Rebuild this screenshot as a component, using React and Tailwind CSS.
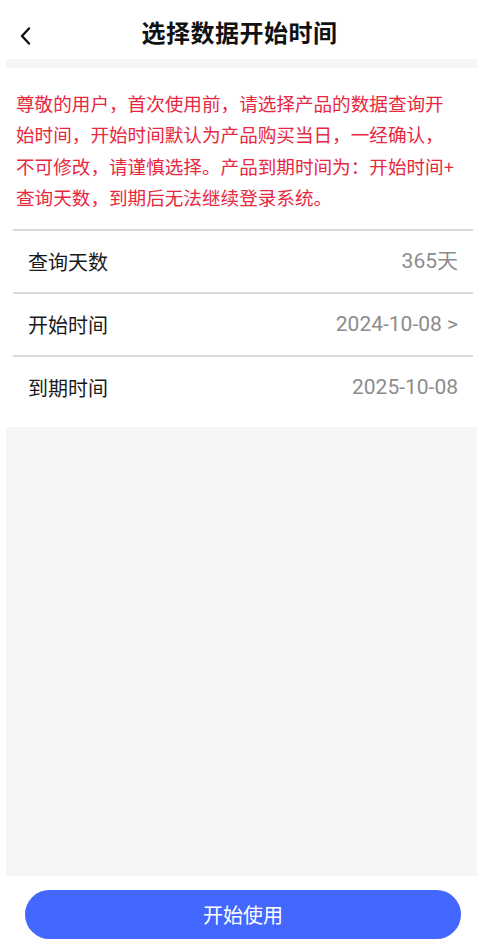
import React from 'react';

const rows = [
  { label: '查询天数', value: '365天' },
  { label: '开始时间', value: '2024-10-08 >' },
  { label: '到期时间', value: '2025-10-08' },
];

const App = () => {
  return (
    <div className="w-[479px] h-[951px] bg-white flex flex-col font-['Noto_Sans_CJK_SC','Noto_Sans',sans-serif]">
      <header className="relative h-[59px] flex items-center justify-center shrink-0">
        <button className="absolute left-[14px] top-[22px] p-1">
          <svg width="14" height="20" viewBox="0 0 14 20" fill="none">
            <path d="M11 2.5 L4 10 L11 17.5" stroke="#111" strokeWidth="2.4" strokeLinecap="round" strokeLinejoin="round" />
          </svg>
        </button>
        <h1 className="text-[24px] font-bold text-[#111] tracking-[0.5px] mt-[4px]">选择数据开始时间</h1>
      </header>

      <main className="ml-[6px] mr-[2px] h-[817px] bg-[#f5f6f8] pt-[9px] flex flex-col">
        <section className="bg-white pt-[19px] pb-[9px]">
          <p className="pl-[10px] pr-[18px] text-[18.6px] leading-[31.3px] text-[#e8283f]">
            {'尊敬的用户，首次使用前，请选择产品的数据查询开始时间，开始时间默认为产品购买当日，一经确认，不可修改，请谨慎选择。产品到期时间为：开始时间+\u200b查询天数，到期后无法继续登录系统。'}
          </p>
          <ul className="mt-[17px] ml-[7px] mr-[4px]">
            {rows.map((row) => (
              <li
                key={row.label}
                className="h-[63px] border-t-2 border-[#d9d9d9] flex items-center justify-between pl-[15px] pr-[15px]"
              >
                <span className="text-[20px] text-[#1a1a1a]">{row.label}</span>
                <span className="text-[21px] text-[#8c8c8c] font-['Roboto','Noto_Sans_CJK_SC',sans-serif]">{row.value}</span>
              </li>
            ))}
          </ul>
        </section>
      </main>

      <div className="flex-1 flex items-start pt-[14px] pl-[25px] pr-[18px]">
        <button className="w-full h-[49px] rounded-full bg-[#4367ff] text-white text-[20px]">
          开始使用
        </button>
      </div>
    </div>
  );
};

export default App;
